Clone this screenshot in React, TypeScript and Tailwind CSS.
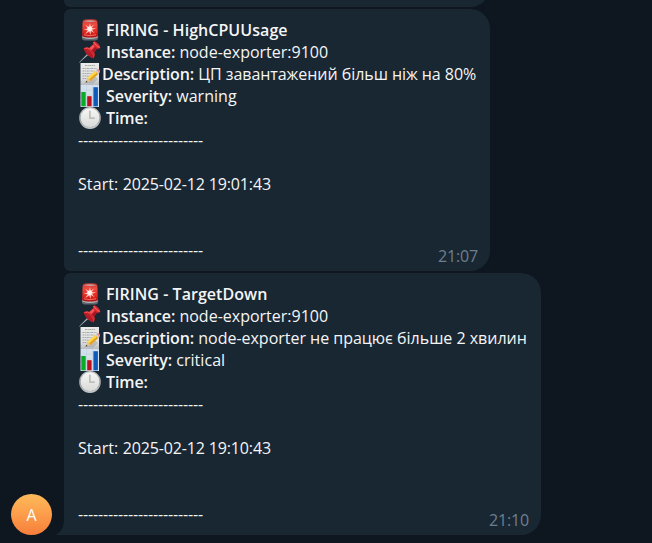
import type { ReactNode } from 'react';

function Siren() {
  return (
    <svg viewBox="0 0 22 22" className="h-[22px] w-[22px]">
      <defs>
        <linearGradient id="siren" x1="0" y1="0" x2="0" y2="1">
          <stop offset="0" stopColor="#c93a36" />
          <stop offset="0.3" stopColor="#f04a40" />
          <stop offset="0.7" stopColor="#e32620" />
          <stop offset="1" stopColor="#a90f12" />
        </linearGradient>
      </defs>
      <path d="M2.900 17h16.200v2q0 2.200-3.200 2.400H6.100Q2.900 21.200 2.900 19z" fill="#62696e" />
      <path d="M3.500 16.500h15v2q-7.500 3-15 0z" fill="#aeb3b5" />
      <path d="M3.600 3Q3.800.900 6 .600q5-.700 10 0 2.200.300 2.400 2.400l.400 13q0 2-3 2.200-4.800.700-9.600 0-3-.200-3-2.200z" fill="url(#siren)" />
      <path d="M5 2.300q6-2 12 0-6 1.300-12 0" fill="#c6a39d" />
      <path d="m11 4 .800 3.700L15 5.500l-2.200 3.400 4.200.700-4 1.200 2.500 3.400-3.500-2.200-.500 4-1.300-3.600-4 2.600 2.500-3.700-4-.700 4-1.200-2-3.300 3.200 1.900z" fill="#ffc4ba" />
      <circle cx="10.600" cy="9.800" r="2.300" fill="#fff4ed" />
      <path d="M5 15.800q6 1.800 12 0" fill="none" stroke="#ff6a5d" />
    </svg>
  );
}

function Pin() {
  return (
    <svg viewBox="0 0 22 22" className="h-[22px] w-[22px]">
      <path d="M.3 21.500 9 12l1.300 1.200z" fill="#8b99a5" />
      <path d="m.300 21.500 8.300-8.200" stroke="#b9c4cc" strokeWidth=".6" />
      <path d="M4.600 7.300q3-2 5.900-.5l3.400-3.300q-.3-2.100 1.300-3.200 4.400 1.300 6.200 6.200-1.200 1.500-3.200 1.100l-3.100 3.500q1.700 3.100-.6 6.300Q7.400 15.200 4.600 7.300" fill="#d62a30" />
      <path d="M4.600 7.300q5 1 7.300 4 2.500 2.800 2.600 6.100Q7.400 15.200 4.600 7.300" fill="#b51c25" />
      <path d="m10.500 7 3.500-3.300 1.600 1.800-3.400 3.700z" fill="#f2555a" />
      <path d="m12.500 9.800 3.600-3.700 2 1.700-3.100 3.400z" fill="#a51824" />
      <path d="M14.700.900q1.700 3.300 5.900 5.800" fill="none" stroke="#ff5a59" strokeWidth="1.100" />
      <path d="M5.600 7.600q3-1.400 5.200.500" fill="none" stroke="#f65255" />
    </svg>
  );
}

function Memo() {
  return (
    <svg viewBox="0 0 22 22" className="h-[22px] w-[22px]">
      <defs>
        <linearGradient id="paper" x1="0" y1="0" x2="0" y2="1">
          <stop stopColor="#eaeae8" /><stop offset=".7" stopColor="#dedfe0" /><stop offset="1" stopColor="#b8bcc1" />
        </linearGradient>
      </defs>
      <path d="M1.500 0H20v22H1.500z" fill="url(#paper)" />
      <g fill="none" stroke="#969897" strokeWidth=".8" strokeDasharray="2 .600 1.200 .500">
        <path d="M6 2.500h10M3.500 5.500h14M3.500 8h12M3.500 10.500h9M3.500 13h6M3.500 15.500h4" />
      </g>
      <path d="m7 20 9-7 3 3-5 4.500z" fill="#979b9f" opacity=".45" />
      <path d="m6.500 19.800 2.100-5 2.900 3.200z" fill="#e7c391" />
      <path d="m6.500 19.800.9-2.100 1.200 1.300z" fill="#343331" />
      <path d="m8.500 14.800 7.900-7 2.900 3.200-7.800 7z" fill="#e7a019" />
      <path d="m8.500 14.800 7.900-7 1.500 1.600-8 7z" fill="#ffda4c" />
      <path d="m16.300 7.900 1.200-1.100 2.900 3.200-1.100 1z" fill="#c7cdd0" />
      <path d="m17.500 6.800.7-.6q1-.8 2.100.4t.6 2.800l-.5.600z" fill="#ef8d8b" />
    </svg>
  );
}

function Chart() {
  return (
    <svg viewBox="0 0 22 22" className="h-[22px] w-[22px]">
      <path d="M1.500 0H20v22H1.500z" fill="#d3e1ec" />
      <path d="M1.500 5H20M1.500 10H20M1.500 15H20M7.500 0v22M13.500 0v22" stroke="#bccddb" strokeWidth=".5" />
      <path d="M2.300 7h4.400v14.300H2.300z" fill="#08ad25" />
      <path d="M8.200 11.200h4.400v10.100H8.200z" fill="#bd101d" />
      <path d="M14.400 2.200h4.500v19.100h-4.500z" fill="#0d5abb" />
    </svg>
  );
}

function Clock() {
  return (
    <svg viewBox="0 0 22 22" className="h-[22px] w-[22px]">
      <defs>
        <linearGradient id="rim" x1="0" y1="0" x2="0" y2="1">
          <stop stopColor="#c8cccd" /><stop offset=".5" stopColor="#999d9f" /><stop offset="1" stopColor="#c5c8c9" />
        </linearGradient>
        <linearGradient id="face" x1="0" y1="0" x2="0" y2="1">
          <stop stopColor="#f7f7f6" /><stop offset="1" stopColor="#d9d9d8" />
        </linearGradient>
      </defs>
      <circle cx="11" cy="11" r="10.900" fill="url(#rim)" />
      <circle cx="11" cy="10.700" r="9.400" fill="url(#face)" />
      <path d="M10.900 3.800v7.300h4.800" fill="none" stroke="#adafae" strokeWidth="1.300" />
    </svg>
  );
}

interface RowProps { icon: ReactNode; label: string; value?: string; labelClass?: string; valueClass?: string; tight?: boolean }

function Row({ icon, label, value, labelClass = '', valueClass = '', tight }: RowProps) {
  return (
    <div className="flex h-[22px] whitespace-pre">
      <span className="w-6 shrink-0 pl-px">{icon}</span>
      <span className={tight ? '' : 'pl-1'}>
        <b className={'font-semibold ' + labelClass}>{label}</b>
        {value && <span className={valueClass}>{' ' + value}</span>}
      </span>
    </div>
  );
}

interface Alert { name: string; description: string; severity: string; start: string; time: string }

function Message({ alert, className, descriptionClass }: { alert: Alert; className: string; descriptionClass: string }) {
  return (
    <article className={'relative h-[262px] shrink-0 rounded-l-[6px] rounded-r-[20px] bg-[#192733] pt-[10px] pl-[14px] text-[16px] leading-[22px] text-[#f5f5f5] ' + className}>
      <Row icon={<Siren />} label={'FIRING - ' + alert.name} labelClass="tracking-[0.05px]" />
      <Row icon={<Pin />} label="Instance:" value="node-exporter:9100" labelClass="tracking-[-0.1px]" />
      <Row icon={<Memo />} label="Description:" value={alert.description} labelClass="tracking-[-0.08px]" valueClass={descriptionClass} tight />
      <Row icon={<Chart />} label="Severity:" value={alert.severity} labelClass="tracking-[-0.05px]" valueClass="tracking-[0.05px]" />
      <Row icon={<Clock />} label="Time:" labelClass="tracking-[-0.1px]" />
      <div className="tracking-[-0.15px]">-------------------------</div>
      <div className="pt-[22px]"><span className="tracking-[0.1px]">Start: </span><span className="tracking-[-0.14px]">{alert.start}</span></div>
      <div className="pt-[44px] tracking-[-0.15px]">-------------------------</div>
      <time className="absolute right-3 bottom-1 tracking-[-0.15px] text-[#6d7f8f]">{alert.time}</time>
    </article>
  );
}

export default function App() {
  return (
    <main className="flex h-[543px] w-[652px] flex-col overflow-hidden bg-[#0e1620] pl-16 font-['Open_Sans','Noto_Sans',sans-serif]">
      <div className="h-[7px] w-[426px] shrink-0 overflow-hidden">
        <div className="-mt-[33px] h-10 rounded-l-[6px] rounded-r-[20px] bg-[#192733]" />
      </div>
      <Message className="mt-[2px] w-[426px]" descriptionClass="tracking-[-0.05px]" alert={{ name: 'HighCPUUsage', description: 'ЦП завантажений більш ніж на 80%', severity: 'warning', start: '2025-02-12 19:01:43', time: '21:07' }} />
      <div className="relative mt-[2px]">
        <Message className="w-[477px] rounded-bl-none" descriptionClass="tracking-[-0.02px]" alert={{ name: 'TargetDown', description: 'node-exporter не працює більше 2 хвилин', severity: 'critical', start: '2025-02-12 19:10:43', time: '21:10' }} />
        <svg viewBox="0 0 8 14" className="absolute bottom-0 -left-2 h-[14px] w-2"><path d="M8 0v14H1q-.8-.3 0-1 6-3 7-13" fill="#192733" /></svg>
        <div className="absolute bottom-0 -left-[53px] flex h-[41px] w-[41px] items-center justify-center rounded-full bg-linear-to-b from-[#ffba5a] to-[#f77e3b] text-[16px] font-medium text-white">A</div>
      </div>
    </main>
  );
}
